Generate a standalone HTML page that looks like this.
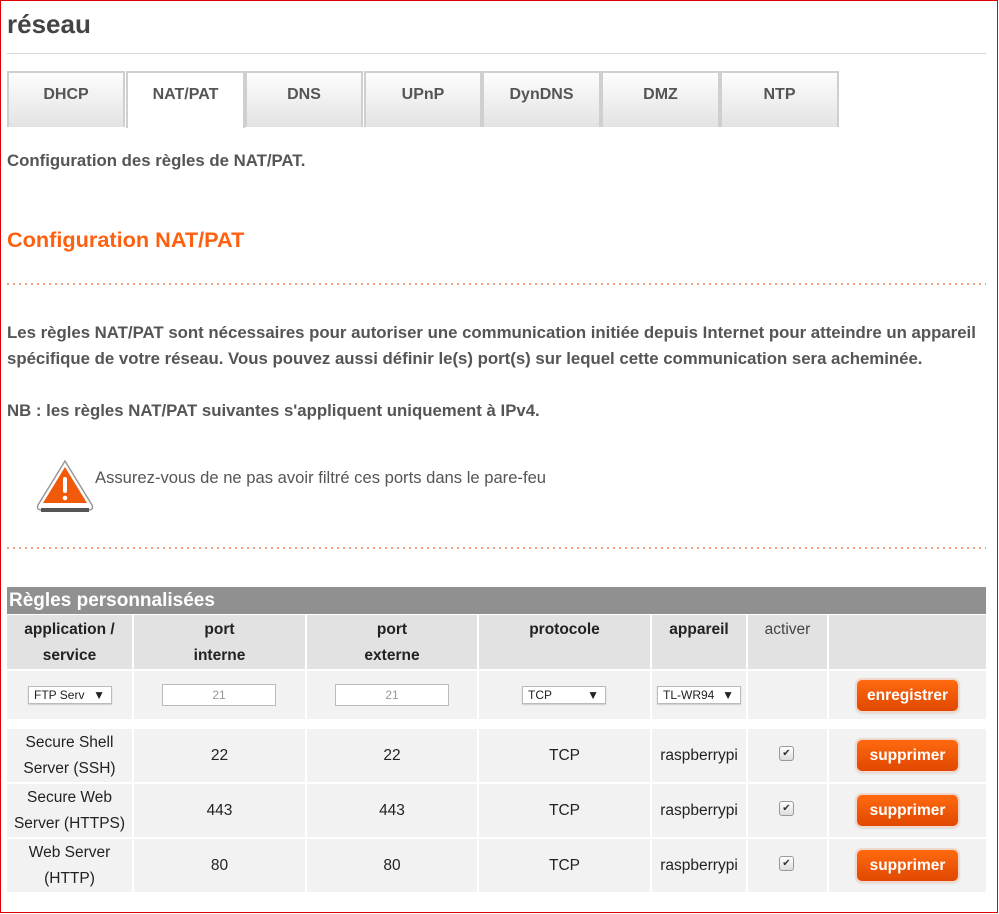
<!DOCTYPE html>
<html><head><meta charset="utf-8"><style>
*{margin:0;padding:0;box-sizing:border-box}
body{width:999px;height:914px;position:relative;background:#fff;font-family:"Liberation Sans",Arial,sans-serif;overflow:hidden}
.frame{position:absolute;left:0;top:0;width:998px;height:913px;border:1px solid #e00000}
.a{position:absolute}
h1{position:absolute;left:7px;top:9px;font-size:26px;font-weight:bold;color:#444}
.hr{position:absolute;left:7px;top:53px;width:979px;height:1px;background:#d6d6d6}
.tab{position:absolute;top:71px;height:56px;border:2px solid #cfcfcf;border-bottom:none;background:linear-gradient(#fdfdfd,#e3e3e3);font-size:16px;font-weight:bold;color:#555;text-align:center;padding-top:13px}
.tab.on{background:#fff;height:57px}
.txt{position:absolute;left:7px;font-size:16.8px;font-weight:bold;color:#555;white-space:nowrap}
.dots{position:absolute;left:7px;width:979px;height:2px;background:repeating-linear-gradient(90deg,#f4a27a 0 2px,transparent 2px 6px)}
.c{position:absolute;text-align:center;font-size:15.5px;color:#222;display:flex;align-items:center;justify-content:center;line-height:26px}
.hd{background:#e2e2e2;font-weight:bold;align-items:flex-start;padding-top:2px}
.r{background:#f2f2f2}
.sel{position:absolute;height:18px;border:1px solid #bbb;background:#fff;font-size:12px;color:#222;padding-left:5px;line-height:16px;box-shadow:0 1px 1px #ccc}
.sel span{position:absolute;right:6px;top:0;font-size:12px}
.inp{position:absolute;height:22px;border:1px solid #bbb;background:#fff;font-size:12px;color:#999;text-align:center;line-height:20px}
.btn{position:absolute;left:857px;width:101px;height:31px;border-radius:5px;background:linear-gradient(#ff6a10,#e04800);color:#fff;font-weight:bold;font-size:15.5px;text-align:center;line-height:31px;box-shadow:0 0 0 2px #f0d8cc,0 1px 3px #999}
.cb{position:absolute;left:779px;width:15px;height:15px;border:1px solid #999;border-radius:3px;background:linear-gradient(#fff,#ddd);font-size:10px;line-height:13px;text-align:center;color:#333}
</style></head><body>
<div class="frame"></div>
<h1>réseau</h1>
<div class="hr"></div>
<div class="tab" style="left:7px;width:118px">DHCP</div>
<div class="tab on" style="left:126px;width:119px">NAT/PAT</div>
<div class="tab" style="left:245px;width:118px">DNS</div>
<div class="tab" style="left:364px;width:118px">UPnP</div>
<div class="tab" style="left:482px;width:119px">DynDNS</div>
<div class="tab" style="left:601px;width:119px">DMZ</div>
<div class="tab" style="left:720px;width:119px">NTP</div>
<div class="txt" style="top:151px">Configuration des règles de NAT/PAT.</div>
<div class="a" style="left:7px;top:227px;font-size:21.7px;font-weight:bold;color:#ff6010">Configuration NAT/PAT</div>
<div class="dots" style="top:283px"></div>
<div class="txt" style="top:320px;line-height:26px">Les règles NAT/PAT sont nécessaires pour autoriser une communication initiée depuis Internet pour atteindre un appareil<br>spécifique de votre réseau. Vous pouvez aussi définir le(s) port(s) sur lequel cette communication sera acheminée.</div>
<div class="txt" style="top:401px">NB : les règles NAT/PAT suivantes s'appliquent uniquement à IPv4.</div>
<svg class="a" style="left:34px;top:458px" width="62" height="56" viewBox="0 0 62 56">
<path d="M31 3 L58 47 Q60 52 54 52 L8 52 Q2 52 4 47 Z" fill="#fff" stroke="#999" stroke-width="1.5"/>
<path d="M7 52 L55 52" stroke="#555" stroke-width="4"/>
<path d="M31 9 L53 45 L9 45 Z" fill="#f05a0a"/>
<rect x="29" y="19" width="4" height="16" rx="2" fill="#fff"/><circle cx="31" cy="40" r="2.3" fill="#fff"/>
</svg>
<div class="a" style="left:95px;top:468px;font-size:16.6px;color:#555">Assurez-vous de ne pas avoir filtré ces ports dans le pare-feu</div>
<div class="dots" style="top:547px"></div>
<div class="a" style="left:7px;top:587px;width:979px;height:27px;background:#909090;color:#fff;font-weight:bold;font-size:19px;padding-left:2px;line-height:27px">Règles personnalisées</div>
<div class="c hd" style="left:7px;top:615px;width:125px;height:54px">application /<br>service</div>
<div class="c hd" style="left:134px;top:615px;width:171px;height:54px">port<br>interne</div>
<div class="c hd" style="left:307px;top:615px;width:170px;height:54px">port<br>externe</div>
<div class="c hd" style="left:479px;top:615px;width:171px;height:54px">protocole</div>
<div class="c hd" style="left:652px;top:615px;width:94px;height:54px">appareil</div>
<div class="c hd" style="left:748px;top:615px;width:79px;height:54px;font-weight:normal;color:#444">activer</div>
<div class="c hd" style="left:829px;top:615px;width:157px;height:54px"></div>
<div class="c r" style="left:7px;top:671px;width:125px;height:48px"></div>
<div class="c r" style="left:134px;top:671px;width:171px;height:48px"></div>
<div class="c r" style="left:307px;top:671px;width:170px;height:48px"></div>
<div class="c r" style="left:479px;top:671px;width:171px;height:48px"></div>
<div class="c r" style="left:652px;top:671px;width:94px;height:48px"></div>
<div class="c r" style="left:748px;top:671px;width:79px;height:48px"></div>
<div class="c r" style="left:829px;top:671px;width:157px;height:48px"></div>
<div class="sel" style="left:28px;top:686px;width:84px">FTP Serv<span>▼</span></div>
<div class="inp" style="left:162px;top:684px;width:114px">21</div>
<div class="inp" style="left:335px;top:684px;width:114px">21</div>
<div class="sel" style="left:522px;top:686px;width:84px">TCP<span>▼</span></div>
<div class="sel" style="left:657px;top:686px;width:84px">TL-WR94<span>▼</span></div>
<div class="btn" style="top:680px">enregistrer</div>
<div class="c r" style="left:7px;top:729px;width:125px;height:53px">Secure Shell<br>Server (SSH)</div>
<div class="c r" style="left:134px;top:729px;width:171px;height:53px">22</div>
<div class="c r" style="left:307px;top:729px;width:170px;height:53px">22</div>
<div class="c r" style="left:479px;top:729px;width:171px;height:53px">TCP</div>
<div class="c r" style="left:652px;top:729px;width:94px;height:53px">raspberrypi</div>
<div class="c r" style="left:748px;top:729px;width:79px;height:53px"></div>
<div class="c r" style="left:829px;top:729px;width:157px;height:53px"></div>
<div class="c r" style="left:7px;top:784px;width:125px;height:53px">Secure Web<br>Server (HTTPS)</div>
<div class="c r" style="left:134px;top:784px;width:171px;height:53px">443</div>
<div class="c r" style="left:307px;top:784px;width:170px;height:53px">443</div>
<div class="c r" style="left:479px;top:784px;width:171px;height:53px">TCP</div>
<div class="c r" style="left:652px;top:784px;width:94px;height:53px">raspberrypi</div>
<div class="c r" style="left:748px;top:784px;width:79px;height:53px"></div>
<div class="c r" style="left:829px;top:784px;width:157px;height:53px"></div>
<div class="c r" style="left:7px;top:839px;width:125px;height:53px">Web Server<br>(HTTP)</div>
<div class="c r" style="left:134px;top:839px;width:171px;height:53px">80</div>
<div class="c r" style="left:307px;top:839px;width:170px;height:53px">80</div>
<div class="c r" style="left:479px;top:839px;width:171px;height:53px">TCP</div>
<div class="c r" style="left:652px;top:839px;width:94px;height:53px">raspberrypi</div>
<div class="c r" style="left:748px;top:839px;width:79px;height:53px"></div>
<div class="c r" style="left:829px;top:839px;width:157px;height:53px"></div>
<div class="cb" style="top:746px">✔</div>
<div class="cb" style="top:801px">✔</div>
<div class="cb" style="top:856px">✔</div>
<div class="btn" style="top:740px">supprimer</div>
<div class="btn" style="top:795px">supprimer</div>
<div class="btn" style="top:850px">supprimer</div>
</body></html>
